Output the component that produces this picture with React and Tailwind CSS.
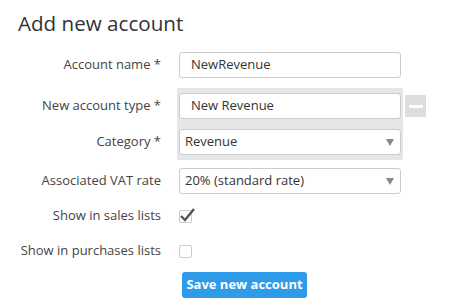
const font = { fontFamily: '"Open Sans", "Liberation Sans", sans-serif' };

function Label({ children, className = "" }) {
  return (
    <div className={`w-[161px] shrink-0 text-right text-[13px] text-[#444] ${className}`}>
      {children}
    </div>
  );
}

function TextInput({ value }) {
  return (
    <div className="flex h-[26px] w-[222px] items-center rounded-[3px] border border-[#ccc] bg-white pl-[11px] text-[13px] text-[#333]">
      {value}
    </div>
  );
}

function Select({ value }) {
  return (
    <div className="flex h-[26px] w-[222px] items-center justify-between rounded-[3px] border border-[#ccc] bg-white pl-[5px] pr-[6px] text-[13px] text-[#333]">
      <span>{value}</span>
      <svg width="8" height="7" viewBox="0 0 8 7">
        <path d="M0 0 L8 0 L4 7 Z" fill="#888" />
      </svg>
    </div>
  );
}

function Checkbox({ checked }) {
  return (
    <div className="relative h-[13px] w-[13px] rounded-[2px] border border-[#ccc] bg-white">
      {checked && (
        <svg className="absolute left-[-1px] top-[-5px]" width="17" height="17" viewBox="0 0 17 17">
          <path d="M2 10 L6 14 L15 3" fill="none" stroke="#555" strokeWidth="2.4" />
        </svg>
      )}
    </div>
  );
}

export default function App() {
  return (
    <div className="h-[303px] w-[450px] bg-white" style={font}>
      <h1 className="pl-[18px] pt-[8px] text-[20.6px] leading-[30px] text-[#333]">Add new account</h1>

      <div className="mt-[14px] flex items-center gap-[18px]">
        <Label>Account name *</Label>
        <TextInput value="NewRevenue" />
      </div>

      <div className="mt-[10px] flex">
        <div className="flex w-[161px] shrink-0 flex-col pt-[5px]">
          <Label className="flex h-[26px] items-center justify-end">New account type *</Label>
          <Label className="mt-[10px] flex h-[26px] items-center justify-end">Category *</Label>
        </div>
        <div className="ml-[16px] flex w-[226px] flex-col gap-[10px] bg-[#e6e6e6] pb-[5px] pl-[2px] pt-[5px]">
          <TextInput value="New Revenue" />
          <Select value="Revenue" />
        </div>
        <div className="ml-[2px] mt-[7px] flex h-[22px] w-[21px] items-center justify-center bg-[#ddd]">
          <div className="h-[3px] w-[14px] bg-white" />
        </div>
      </div>

      <div className="mt-[8px] flex items-center gap-[18px]">
        <Label>Associated VAT rate</Label>
        <Select value="20% (standard rate)" />
      </div>

      <div className="mt-[9px] flex h-[26px] items-center gap-[18px]">
        <Label>Show in sales lists</Label>
        <Checkbox checked />
      </div>

      <div className="mt-[9px] flex h-[26px] items-center gap-[18px]">
        <Label>Show in purchases lists</Label>
        <Checkbox />
      </div>

      <div className="mt-[7px] pl-[182px]">
        <button className="h-[26px] w-[125px] rounded-[3px] bg-[#2d9be8] text-[13px] font-bold text-white">
          Save new account
        </button>
      </div>
    </div>
  );
}
